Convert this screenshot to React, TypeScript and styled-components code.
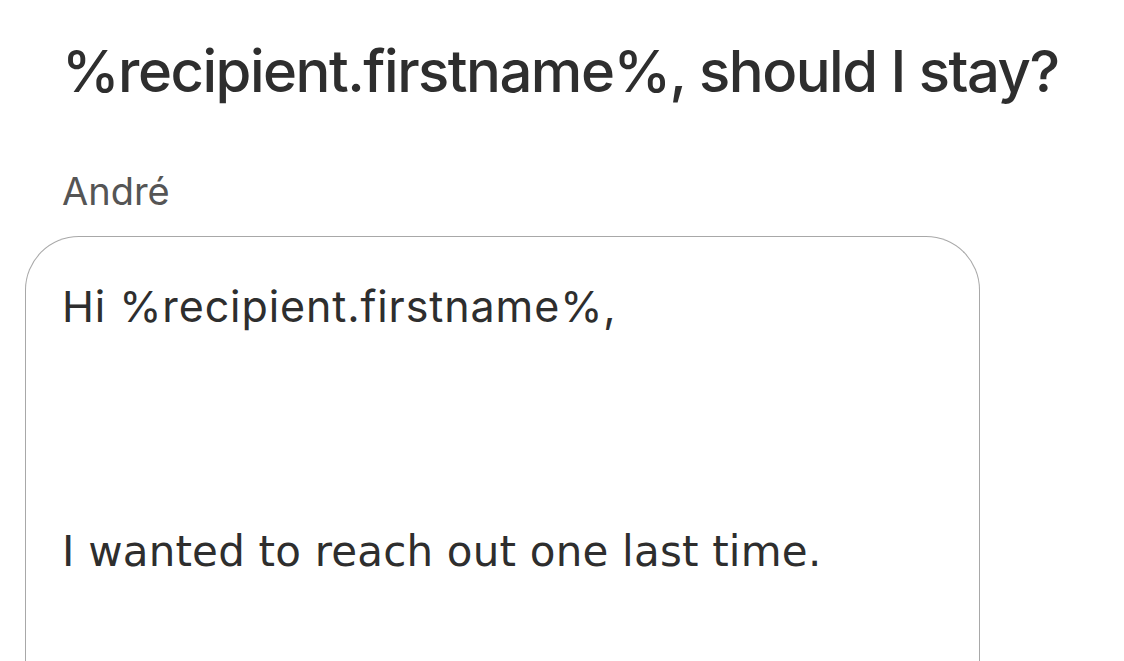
import styled, { createGlobalStyle } from "styled-components";

const GlobalStyle = createGlobalStyle`
  html, body {
    margin: 0;
    padding: 0;
    background: #ffffff;
  }
  body {
    font-family: Inter, "Noto Sans", sans-serif;
    color: #2e2e2e;
    overflow: hidden;
  }
`;

const Page = styled.div`
  width: 1124px;
  height: 661px;
  overflow: hidden;
  display: flex;
  flex-direction: column;
`;

const Title = styled.h1`
  margin: 42px 0 0 62px;
  font-family: Inter, "Noto Sans", sans-serif;
  font-size: 58px;
  font-weight: 500;
  letter-spacing: -1.5px;
  line-height: 1;
  color: #2e2e2e;
  white-space: nowrap;
`;

const Sender = styled.div`
  margin: 72px 0 0 62px;
  font-family: Inter, "Noto Sans", sans-serif;
  font-size: 38px;
  font-weight: 400;
  line-height: 1;
  color: #555555;
`;

const MessageBox = styled.div`
  margin: 26px 0 0 25px;
  width: 955px;
  box-sizing: border-box;
  flex: 1;
  border: 1px solid #a8a8a8;
  border-bottom: none;
  border-radius: 54px 54px 0 0;
  padding: 48px 0 0 36px;
  display: flex;
  flex-direction: column;
`;

const Greeting = styled.p`
  margin: 0;
  font-family: Inter, "Noto Sans", sans-serif;
  font-size: 43px;
  font-weight: 400;
  letter-spacing: 0.9px;
  line-height: 1;
  color: #2e2e2e;
  white-space: nowrap;
`;

const BodyLine = styled.p`
  margin: 203px 0 0 0;
  font-family: "DejaVu Sans", Verdana, sans-serif;
  font-size: 42px;
  letter-spacing: 0.2px;
  line-height: 1;
  color: #2e2e2e;
  white-space: nowrap;
`;

export default function App() {
  return (
    <>
      <GlobalStyle />
      <Page>
        <Title>%recipient.firstname%, should I stay?</Title>
        <Sender>André</Sender>
        <MessageBox>
          <Greeting>Hi %recipient.firstname%,</Greeting>
          <BodyLine>I wanted to reach out one last time.</BodyLine>
        </MessageBox>
      </Page>
    </>
  );
}
